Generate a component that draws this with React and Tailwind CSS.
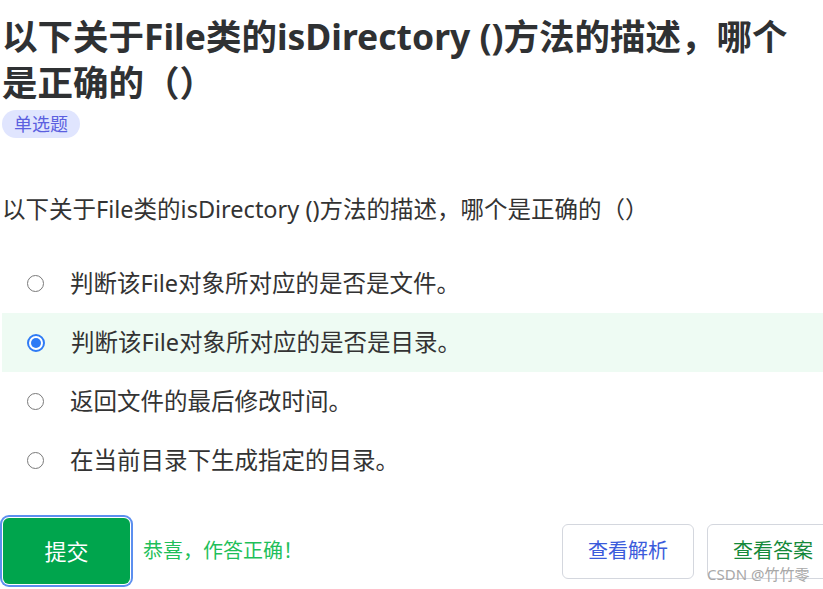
import { useState } from "react";

const options = [
  "判断该File对象所对应的是否是文件。",
  "判断该File对象所对应的是否是目录。",
  "返回文件的最后修改时间。",
  "在当前目录下生成指定的目录。",
];

function Radio({ checked }) {
  if (checked) {
    return (
      <span className="flex h-[18px] w-[18px] shrink-0 items-center justify-center rounded-full border-2 border-[#2f7bf5] bg-white">
        <span className="h-[10px] w-[10px] rounded-full bg-[#2f7bf5]" />
      </span>
    );
  }
  return (
    <span className="h-[17px] w-[17px] shrink-0 rounded-full border border-[#7a7a7a] bg-white" />
  );
}

export default function App() {
  const [selected, setSelected] = useState(1);

  return (
    <div className="relative h-[589px] w-full overflow-hidden bg-white pl-[2px] font-['Noto_Sans','Noto_Sans_CJK_SC',sans-serif] text-[#333]">
      {/* judul soal */}
      <h1 className="mt-[13px] text-[35.5px] font-bold leading-[46px] text-[#2f3133]">
        以下关于File类的isDirectory ()方法的描述，哪个
        <br />
        是正确的（）
      </h1>

      <span className="mt-[5px] inline-flex h-[28px] items-center rounded-full bg-[#e0e5fe] px-[12px] text-[18px] text-[#5b5fe0]">
        单选题
      </span>

      <p className="mt-[55px] text-[23.5px] leading-[32px] text-[#333]">
        以下关于File类的isDirectory ()方法的描述，哪个是正确的（）
      </p>

      {/* pilihan */}
      <div className="mt-[29px] flex flex-col">
        {options.map((opt, i) => (
          <div
            key={i}
            onClick={() => setSelected(i)}
            className={
              "flex h-[59px] cursor-pointer items-center gap-[26px] pl-[25px] " +
              (selected === i ? "bg-[#eefbf3]" : "")
            }
          >
            <Radio checked={selected === i} />
            <span className="text-[23.5px] text-[#333]">{opt}</span>
          </div>
        ))}
      </div>

      {/* tombol */}
      <div className="mt-[28px] flex items-center">
        <button className="ml-[1px] h-[66px] w-[127px] rounded-[6px] bg-[#00a54d] text-[22px] text-white ring-2 ring-[#5c8fef] ring-offset-1">
          提交
        </button>
        <span className="ml-[13px] text-[20px] text-[#1fbf5a]">恭喜，作答正确！</span>

        <div className="-mr-[16px] ml-auto flex shrink-0 gap-[13px]">
          <button className="h-[55px] w-[132px] rounded-[6px] border border-[#d4d7de] bg-white text-[20px] text-[#3b5bdb]">
            查看解析
          </button>
          <button className="h-[55px] w-[132px] rounded-[6px] border border-[#d4d7de] bg-white text-[20px] text-[#15893a]">
            查看答案
          </button>
        </div>
      </div>

      <span className="absolute left-[707px] top-[564px] text-[15px] leading-[20px] text-[#a8a8a8]">
        CSDN @竹竹零
      </span>
    </div>
  );
}
